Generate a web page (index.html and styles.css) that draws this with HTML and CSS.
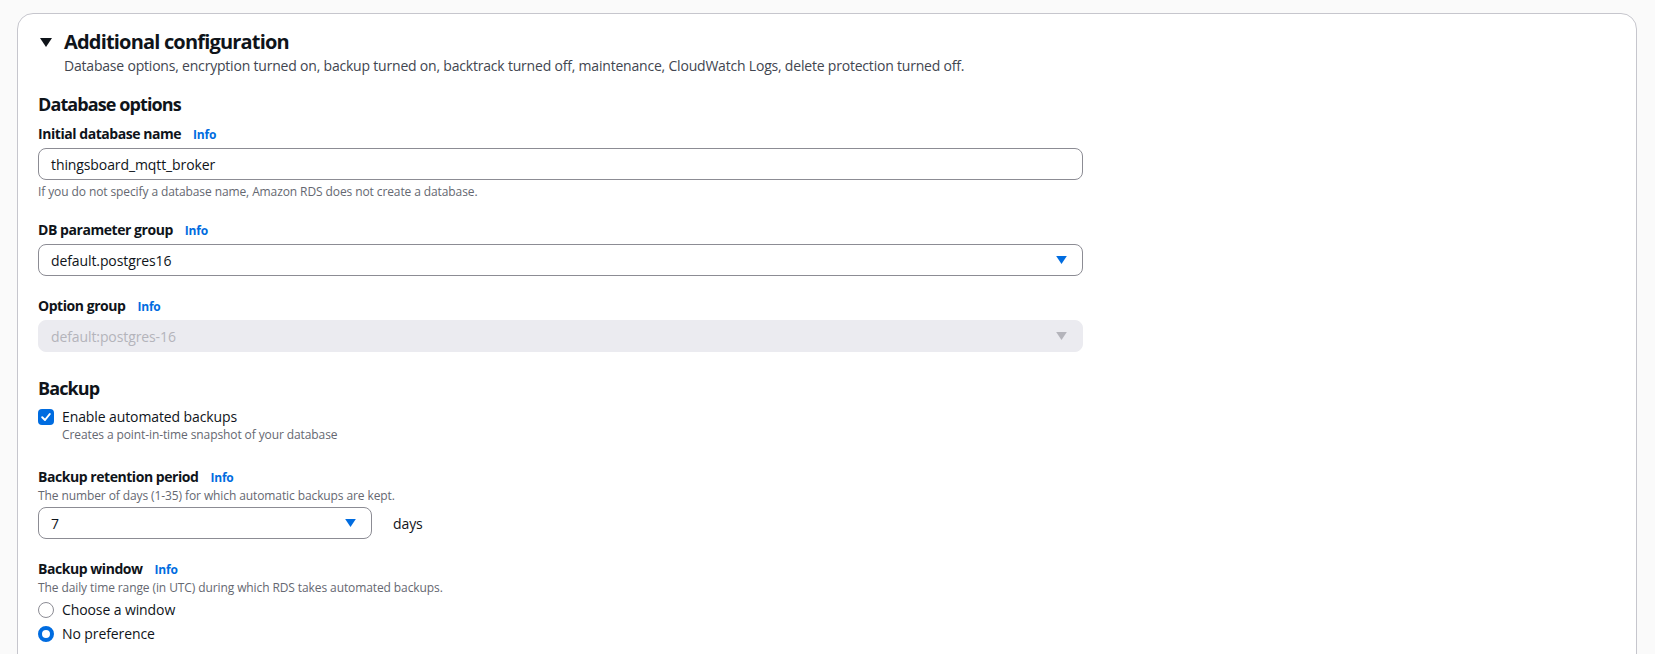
FILE: index.html
```html
<!DOCTYPE html>
<html lang="en">
<head>
<meta charset="utf-8">
<title>Additional configuration</title>
<link rel="stylesheet" href="styles.css">
</head>
<body>
<div class="card">
  <div class="header">
    <div class="title-row">
      <svg class="caret" width="12" height="9" viewBox="0 0 12 9"><polygon points="0,0 12,0 6,9" fill="#0f141a"/></svg>
      <h2 class="title">Additional configuration</h2>
    </div>
    <div class="header-desc">Database options, encryption turned on, backup turned on, backtrack turned off, maintenance, CloudWatch Logs, delete protection turned off.</div>
  </div>

  <h3 class="section">Database options</h3>

  <div class="field field-first">
    <div class="label">Initial database name <a class="info">Info</a></div>
    <div class="input">thingsboard_mqtt_broker</div>
    <div class="hint">If you do not specify a database name, Amazon RDS does not create a database.</div>
  </div>

  <div class="field">
    <div class="label">DB parameter group <a class="info">Info</a></div>
    <div class="input select">
      <span>default.postgres16</span>
      <svg class="arrow" width="12" height="9" viewBox="0 0 12 9"><polygon points="0,0 12,0 6,9" fill="#006ce0"/></svg>
    </div>
  </div>

  <div class="field">
    <div class="label">Option group <a class="info">Info</a></div>
    <div class="input select disabled">
      <span>default:postgres-16</span>
      <svg class="arrow" width="12" height="9" viewBox="0 0 12 9"><polygon points="0,0 12,0 6,9" fill="#b4b4bb"/></svg>
    </div>
  </div>

  <h3 class="section section-backup">Backup</h3>

  <div class="check-row">
    <span class="checkbox">
      <svg width="16" height="16" viewBox="0 0 16 16"><polyline points="4.2,8.2 7,11 11.8,5" fill="none" stroke="#fff" stroke-width="2" stroke-linecap="round" stroke-linejoin="round"/></svg>
    </span>
    <div class="check-text">
      <div class="check-label">Enable automated backups</div>
      <div class="check-desc">Creates a point-in-time snapshot of your database</div>
    </div>
  </div>

  <div class="field field-retention">
    <div class="label">Backup retention period <a class="info">Info</a></div>
    <div class="desc">The number of days (1-35) for which automatic backups are kept.</div>
    <div class="inline-row">
      <div class="input select small">
        <span>7</span>
        <svg class="arrow" width="12" height="9" viewBox="0 0 12 9"><polygon points="0,0 12,0 6,9" fill="#006ce0"/></svg>
      </div>
      <span class="unit">days</span>
    </div>
  </div>

  <div class="field">
    <div class="label">Backup window <a class="info">Info</a></div>
    <div class="desc">The daily time range (in UTC) during which RDS takes automated backups.</div>
    <div class="radios">
      <div class="radio-row"><span class="radio"></span><span>Choose a window</span></div>
      <div class="radio-row"><span class="radio checked"></span><span>No preference</span></div>
    </div>
  </div>
</div>
</body>
</html>
```

FILE: styles.css
```css
* { box-sizing: border-box; }
html, body { margin: 0; padding: 0; }
body {
  background: #fafafa;
  font-family: "Open Sans", "Noto Sans", "Liberation Sans", sans-serif;
  color: #0f141a;
  letter-spacing: -0.1px;
  height: 654px;
  overflow: hidden;
}
.card {
  margin: 13px 18px 0 17px;
  background: #ffffff;
  border: 1px solid #c6c6cd;
  border-radius: 16px;
  padding: 16px 20px 40px 20px;
  min-height: 700px;
}
.header { margin-left: 2px; }
.title-row {
  display: flex;
  align-items: center;
  gap: 12px;
  height: 24px;
}
.caret { display: block; flex: none; }
.title {
  margin: 0;
  font-size: 20px;
  line-height: 24px;
  font-weight: 700;
  letter-spacing: -0.82px;
}
.header-desc {
  margin-left: 24px;
  margin-top: 2px;
  font-size: 14px;
  line-height: 20px;
  color: #424650;
  letter-spacing: -0.2px;
}
.section {
  margin: 17px 0 0 0;
  font-size: 18px;
  line-height: 22px;
  font-weight: 700;
  letter-spacing: -0.9px;
}
.section-backup { margin-top: 25px; }
.field { margin-top: 20px; }
.field-first { margin-top: 9px; }
.field-retention { margin-top: 24px; }
.label {
  font-size: 14px;
  line-height: 20px;
  font-weight: 700;
  letter-spacing: -0.45px;
  display: flex;
  align-items: baseline;
  gap: 12px;
}
.info {
  font-size: 12px;
  font-weight: 700;
  letter-spacing: -0.2px;
  color: #006ce0;
  text-decoration: none;
}
.desc {
  font-size: 12px;
  line-height: 16px;
  color: #656871;
}
.input {
  margin-top: 3px;
  width: 1045px;
  height: 32px;
  border: 1px solid #8c8c94;
  border-radius: 8px;
  padding: 0 12px;
  font-size: 14px;
  display: flex;
  align-items: center;
  background: #fff;
}
.select { justify-content: space-between; padding-right: 15px; }
.arrow { display: block; flex: none; width: 11px; height: 8px; }
.disabled {
  background: #ebebf0;
  border-color: #ebebf0;
  color: #b4b4bb;
}
.hint {
  margin-top: 4px;
  font-size: 12px;
  line-height: 16px;
  color: #656871;
}
.check-row {
  margin-top: 8px;
  display: flex;
  gap: 8px;
  align-items: flex-start;
}
.checkbox {
  flex: none;
  width: 16px;
  height: 16px;
  margin-top: 2px;
  background: #006ce0;
  border-radius: 4px;
  display: block;
}
.checkbox svg { display: block; }
.check-label { font-size: 14px; line-height: 20px; }
.check-desc { font-size: 12px; line-height: 16px; color: #656871; }
.inline-row {
  margin-top: 3px;
  display: flex;
  align-items: center;
  gap: 21px;
}
.inline-row .input { margin-top: 0; }
.small { width: 334px; }
.unit { font-size: 14px; }
.radios {
  margin-top: 4px;
  display: flex;
  flex-direction: column;
  gap: 4px;
}
.radio-row {
  display: flex;
  align-items: center;
  gap: 8px;
  font-size: 14px;
  line-height: 20px;
}
.radio {
  flex: none;
  width: 16px;
  height: 16px;
  border-radius: 50%;
  border: 1.5px solid #8c8c94;
  background: #fff;
}
.radio.checked {
  border: 4.5px solid #006ce0;
}
```
